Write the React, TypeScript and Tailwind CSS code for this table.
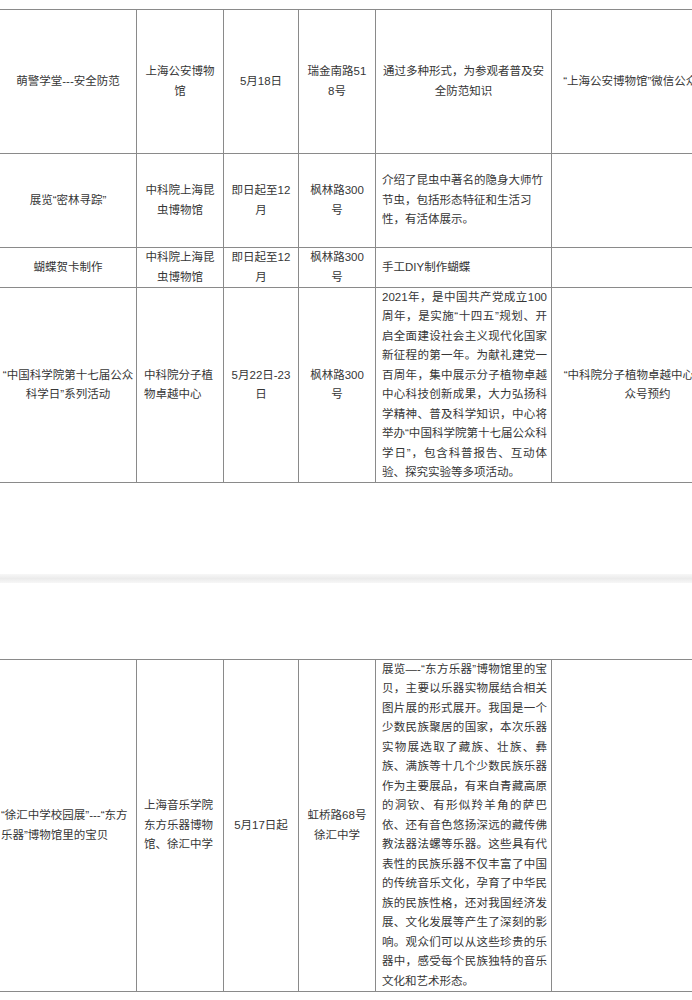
import React from "react";

type Cell = {
  lines: string[];
  align?: "center" | "left";
  justify?: boolean;
  pad?: string;
  firstPad?: string;
};

const B = "border-[#8a8a8a]";

function CellView({ cell, desc }: { cell: Cell; desc?: boolean }) {
  const align = cell.align ?? "center";
  const pad = cell.pad ?? (desc ? "pl-[6px] pr-[4px]" : "px-[2px]");
  return (
    <div
      className={`border-r border-b ${B} flex items-center overflow-visible ${
        align === "center" ? "justify-center text-center" : "justify-start text-left"
      } ${pad}`}
    >
      <div className={cell.justify ? "w-full" : ""}>
        {cell.lines.map((l, i) => {
          const last = i === cell.lines.length - 1;
          if (cell.justify) {
            return (
              <span
                key={i}
                className={`block ${last ? "text-left" : "text-justify [text-align-last:justify]"}`}
              >
                {l}
              </span>
            );
          }
          return (
            <span
              key={i}
              className={`block whitespace-nowrap ${i === 0 && cell.firstPad ? cell.firstPad : ""}`}
            >
              {l}
            </span>
          );
        })}
      </div>
    </div>
  );
}

function Row({ cells }: { cells: Cell[] }) {
  return (
    <>
      {cells.map((c, i) => (
        <CellView key={i} cell={c} desc={i === 4} />
      ))}
    </>
  );
}

const top: Cell[][] = [
  [
    { lines: ["萌警学堂---安全防范"] },
    { lines: ["上海公安博物", "馆"] },
    { lines: ["5月18日"] },
    { lines: ["瑞金南路51", "8号"] },
    { lines: ["通过多种形式，为参观者普及安", "全防范知识"], pad: "px-[2px]" },
    { lines: ["“上海公安博物馆”微信公众号预约"] },
  ],
  [
    { lines: ["展览“密林寻踪”"] },
    { lines: ["中科院上海昆", "虫博物馆"] },
    { lines: ["即日起至12", "月"] },
    { lines: ["枫林路300", "号"] },
    {
      lines: ["介绍了昆虫中著名的隐身大师竹", "节虫，包括形态特征和生活习", "性，有活体展示。"],
      align: "left",
    },
    { lines: [""] },
  ],
  [
    { lines: ["蝴蝶贺卡制作"] },
    { lines: ["中科院上海昆", "虫博物馆"] },
    { lines: ["即日起至12", "月"] },
    { lines: ["枫林路300", "号"] },
    { lines: ["手工DIY制作蝴蝶"], align: "left" },
    { lines: [""] },
  ],
  [
    { lines: ["“中国科学院第十七届公众", "科学日”系列活动"] },
    { lines: ["中科院分子植", "物卓越中心"], align: "left", pad: "pl-[7px]" },
    { lines: ["5月22日-23", "日"] },
    { lines: ["枫林路300", "号"] },
    {
      lines: [
        "2021年，是中国共产党成立100",
        "周年，是实施“十四五”规划、开",
        "启全面建设社会主义现代化国家",
        "新征程的第一年。为献礼建党一",
        "百周年，集中展示分子植物卓越",
        "中心科技创新成果，大力弘扬科",
        "学精神、普及科学知识，中心将",
        "举办“中国科学院第十七届公众科",
        "学日”，包含科普报告、互动体",
        "验、探究实验等多项活动。",
      ],
      align: "left",
      justify: true,
    },
    { lines: ["“中科院分子植物卓越中心”公", "众号预约"], firstPad: "pr-[22px]" },
  ],
];

const bottom: Cell[] = [
  { lines: ["“徐汇中学校园展”---“东方", "乐器”博物馆里的宝贝"], align: "left", pad: "pl-[1px]" },
  { lines: ["上海音乐学院", "东方乐器博物", "馆、徐汇中学"], align: "left", pad: "pl-[7px]" },
  { lines: ["5月17日起"] },
  { lines: ["虹桥路68号", "徐汇中学"] },
  {
    lines: [
      "展览—-“东方乐器”博物馆里的宝",
      "贝，主要以乐器实物展结合相关",
      "图片展的形式展开。我国是一个",
      "少数民族聚居的国家，本次乐器",
      "实物展选取了藏族、壮族、彝",
      "族、满族等十几个少数民族乐器",
      "作为主要展品，有来自青藏高原",
      "的洞钦、有形似羚羊角的萨巴",
      "依、还有音色悠扬深远的藏传佛",
      "教法器法螺等乐器。这些具有代",
      "表性的民族乐器不仅丰富了中国",
      "的传统音乐文化，孕育了中华民",
      "族的民族性格，还对我国经济发",
      "展、文化发展等产生了深刻的影",
      "响。观众们可以从这些珍贵的乐",
      "器中，感受每个民族独特的音乐",
      "文化和艺术形态。",
    ],
    align: "left",
    justify: true,
  },
  { lines: [""] },
];

export default function App() {
  return (
    <div
      className="w-[692px] h-[1000px] overflow-hidden bg-white text-[#363636] text-[11.5px] leading-[19.5px]"
      style={{ fontFamily: '"Liberation Sans", "Noto Sans CJK SC", sans-serif' }}
    >
      <div className="h-[9px]" />
      <div
        className={`grid grid-cols-[137px_87px_75px_77px_176px_192px] grid-rows-[144px_94px_40px_195px] w-[744px] border-t ${B}`}
      >
        {top.map((r, i) => (
          <Row key={i} cells={r} />
        ))}
      </div>
      <div className="h-[91px]" />
      <div className="h-[9px] bg-linear-to-b from-[#f7f7f7] via-[#ebebeb] to-[#f7f7f7]" />
      <div className="h-[76px]" />
      <div
        className={`grid grid-cols-[137px_87px_75px_77px_176px_192px] grid-rows-[332px] w-[744px] border-t ${B}`}
      >
        <Row cells={bottom} />
      </div>
    </div>
  );
}
